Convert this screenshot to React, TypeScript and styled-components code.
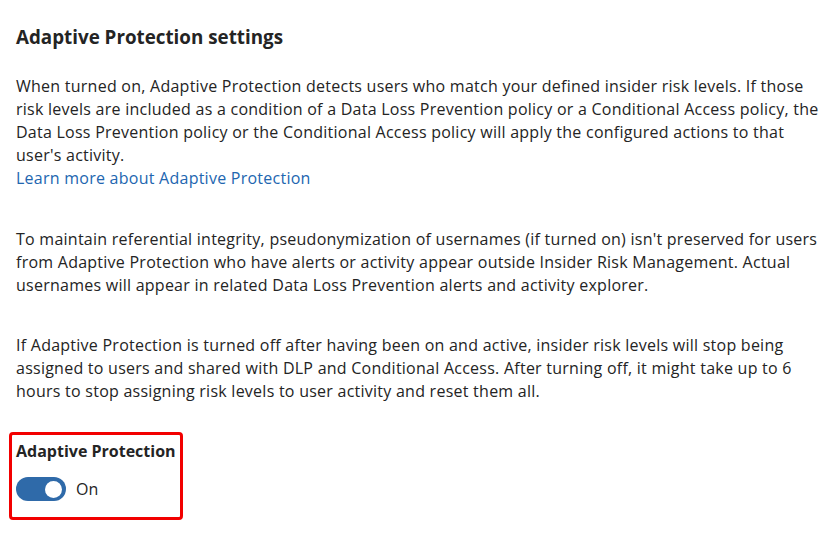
import React from "react";
import styled, { createGlobalStyle } from "styled-components";

const Global = createGlobalStyle`
  html, body { margin: 0; padding: 0; background: #ffffff; }
  body { font-family: "Open Sans", "Noto Sans", sans-serif; color: #242424; }
`;

const Page = styled.main`
  padding: 25px 16px 20px 16px;
  display: flex;
  flex-direction: column;
  align-items: flex-start;
`;

const Title = styled.h2`
  margin: 0 0 26px 0;
  font-size: 18.8px;
  line-height: 24px;
  font-weight: 700;
  color: #242424;
  white-space: nowrap;
`;

const Para = styled.p<{ $gap: number }>`
  margin: 0 0 ${(p) => p.$gap}px 0;
  font-size: 16px;
  line-height: 23px;
  letter-spacing: 0.25px;
  color: #242424;
  white-space: nowrap;
`;

const Link = styled.a`
  color: #2266b0;
  text-decoration: none;
`;

const Highlight = styled.section`
  display: inline-flex;
  flex-direction: column;
  gap: 16px;
  padding: 6px 4px 16px 4px;
  border: 3px solid #f20000;
  border-radius: 4px;
  margin-left: -7px;
`;

const Label = styled.div`
  font-size: 16px;
  line-height: 20px;
  font-weight: 700;
  color: #242424;
  white-space: nowrap;
`;

const ToggleRow = styled.div`
  display: flex;
  align-items: center;
  gap: 10px;
`;

const Track = styled.span<{ $on: boolean }>`
  display: inline-flex;
  align-items: center;
  justify-content: ${(p) => (p.$on ? "flex-end" : "flex-start")};
  box-sizing: border-box;
  width: 50px;
  height: 24px;
  padding: 0 4px;
  border-radius: 12px;
  background: ${(p) => (p.$on ? "#2f6aa9" : "#ffffff")};
`;

const Knob = styled.span`
  width: 17px;
  height: 17px;
  border-radius: 50%;
  background: #ffffff;
`;

const State = styled.span`
  font-size: 16px;
  line-height: 20px;
  color: #242424;
`;

export default function App() {
  return (
    <>
      <Global />
      <Page>
        <Title>Adaptive Protection settings</Title>
        <Para $gap={38}>
          When turned on, Adaptive Protection detects users who match your defined insider risk levels. If those
          <br />
          risk levels are included as a condition of a Data Loss Prevention policy or a Conditional Access policy, the
          <br />
          Data Loss Prevention policy or the Conditional Access policy will apply the configured actions to that
          <br />
          user's activity.
          <br />
          <Link href="#">Learn more about Adaptive Protection</Link>
        </Para>
        <Para $gap={37}>
          To maintain referential integrity, pseudonymization of usernames (if turned on) isn't preserved for users
          <br />
          from Adaptive Protection who have alerts or activity appear outside Insider Risk Management. Actual
          <br />
          usernames will appear in related Data Loss Prevention alerts and activity explorer.
        </Para>
        <Para $gap={29}>
          If Adaptive Protection is turned off after having been on and active, insider risk levels will stop being
          <br />
          assigned to users and shared with DLP and Conditional Access. After turning off, it might take up to 6
          <br />
          hours to stop assigning risk levels to user activity and reset them all.
        </Para>
        <Highlight>
          <Label>Adaptive Protection</Label>
          <ToggleRow>
            <Track $on={true}>
              <Knob />
            </Track>
            <State>On</State>
          </ToggleRow>
        </Highlight>
      </Page>
    </>
  );
}
